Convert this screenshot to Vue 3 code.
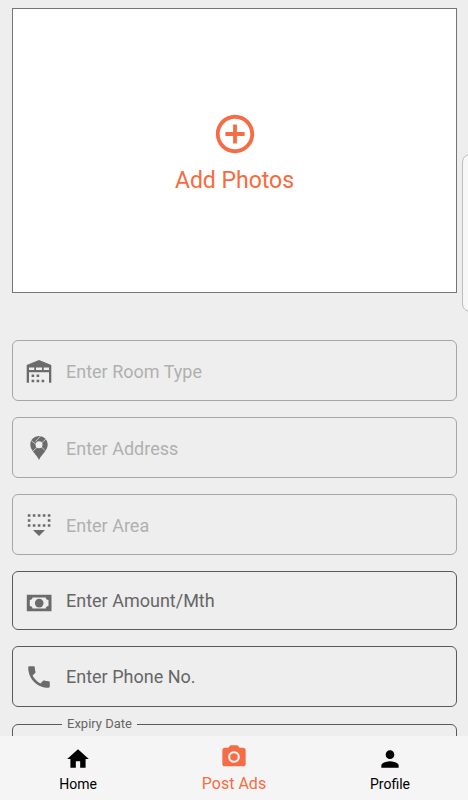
<script setup>
import { ref } from 'vue'

const roomType = ref('')
const address = ref('')
const area = ref('')
const amount = ref('')
const phone = ref('')
const expiry = ref('')
</script>

<template>
  <div class="screen">
    <main class="content">
      <button type="button" class="photos">
        <svg class="photos-icon" viewBox="0 0 24 24" aria-hidden="true">
          <path d="M13 7h-2v4H7v2h4v4h2v-4h4v-2h-4V7zm-1-5C6.48 2 2 6.48 2 12s4.48 10 10 10 10-4.48 10-10S17.52 2 12 2zm0 18c-4.41 0-8-3.59-8-8s3.59-8 8-8 8 3.59 8 8-3.59 8-8 8z" />
        </svg>
        <span>Add Photos</span>
      </button>

      <form class="form" @submit.prevent>
        <label class="field muted">
          <svg class="icon" viewBox="0 0 24 24" aria-hidden="true">
            <path d="M12 1 24.300 6v17.700H22V13.300H2v10.400H-.3V6zM2 8.500V11h5.300V8.500zm7 0V11h6V8.500zm7.700 0V11H22V8.500z" fill-rule="evenodd" />
            <path d="M4.600 15.500h2.600v2.600H4.600zm5 0h2.600v2.600H9.600zM4.600 20.700h2.600v2.600H4.600zm5 0h2.600v2.600H9.600zm5 0h2.600v2.600h-2.600z" />
          </svg>
          <input v-model="roomType" type="text" placeholder="Enter Room Type" aria-label="Room type" />
        </label>

        <label class="field muted">
          <svg class="icon" viewBox="0 0 24 24" aria-hidden="true">
            <path d="M12 0C7.100 0 3.300 3.800 3.300 8.600c0 2.600 1.200 4.800 2.700 7C8 18.500 10.500 20.500 12 24c1.500-3.500 4-5.500 6-8.400 1.500-2.200 2.700-4.400 2.700-7C20.700 3.800 16.900 0 12 0z" />
            <path class="streets" d="M4.500 4.800 8.500 8M5.500 15.500 19.500 2.500M8.500 5.500 13.500 0M14 10.500l4 4" />
            <circle class="hole" cx="12" cy="8.700" r="3.500" />
          </svg>
          <input v-model="address" type="text" placeholder="Enter Address" aria-label="Address" />
        </label>

        <label class="field muted">
          <svg class="icon" viewBox="0 0 24 24" aria-hidden="true">
            <path d="M.8 1.200h2.600v2.600H.8zm5 0h2.600v2.600H5.800zm5 0h2.600v2.600h-2.600zm5 0h2.600v2.600h-2.600zm5 0h2.600v2.600h-2.600zM.8 6.200h2.600v2.600H.8zm20 0h2.600v2.600h-2.600zM.8 11.200h2.600v2.600H.8zm5 0h2.600v2.600H5.800zm5 0h2.600v2.600h-2.600zm5 0h2.600v2.600h-2.600zm5 0h2.600v2.600h-2.600zM6 17h12l-6 6z" />
          </svg>
          <input v-model="area" type="text" placeholder="Enter Area" aria-label="Area" />
        </label>

        <label class="field short">
          <svg class="icon" viewBox="0 0 24 24" aria-hidden="true">
            <path d="M-.2 5.800h24.700v16.500H-.2zM5.500 8.600c0 1.500-1 2.500-2.700 2.500v6c1.700 0 2.700 1 2.700 2.500h13.300c0-1.500 1-2.500 2.700-2.500v-6c-1.700 0-2.700-1-2.700-2.500z" fill-rule="evenodd" />
            <circle cx="12.200" cy="14.100" r="4.300" />
          </svg>
          <input v-model="amount" type="text" inputmode="numeric" placeholder="Enter Amount/Mth" aria-label="Amount per month" />
        </label>

        <label class="field">
          <svg class="icon" viewBox="2 2 20 20" aria-hidden="true">
            <path d="M6.620 10.790c1.440 2.830 3.760 5.140 6.590 6.590l2.200-2.200c.27-.27.67-.36 1.020-.24 1.120.37 2.330.57 3.570.57.55 0 1 .45 1 1V20c0 .55-.45 1-1 1-9.390 0-17-7.610-17-17 0-.55.45-1 1-1h3.500c.55 0 1 .45 1 1 0 1.250.2 2.450.57 3.570.11.35.03.74-.25 1.020l-2.200 2.200z" />
          </svg>
          <input v-model="phone" type="tel" placeholder="Enter Phone No." aria-label="Phone number" />
        </label>

        <fieldset class="expiry">
          <legend><label for="expiry">Expiry Date</label></legend>
          <input id="expiry" v-model="expiry" type="text" />
        </fieldset>
      </form>
    </main>

    <aside class="edge-handle" aria-hidden="true"></aside>

    <nav class="tabs">
      <a href="#home" class="tab">
        <svg viewBox="0 0 24 24" aria-hidden="true"><path d="M10 20v-6h4v6h5v-8h3L12 3 2 12h3v8z" /></svg>
        <span>Home</span>
      </a>
      <a href="#post" class="tab active" aria-current="page">
        <svg viewBox="0 0 24 24" aria-hidden="true">
          <circle cx="12" cy="12" r="3.200" />
          <path d="M9 2 7.170 4H4c-1.100 0-2 .9-2 2v12c0 1.100.9 2 2 2h16c1.100 0 2-.9 2-2V6c0-1.100-.9-2-2-2h-3.170L15 2H9zm3 15c-2.760 0-5-2.240-5-5s2.240-5 5-5 5 2.240 5 5-2.240 5-5 5z" />
        </svg>
        <span>Post Ads</span>
      </a>
      <a href="#profile" class="tab">
        <svg viewBox="0 0 24 24" aria-hidden="true"><path d="M12 12c2.210 0 4-1.790 4-4s-1.790-4-4-4-4 1.790-4 4 1.790 4 4 4zm0 2c-2.670 0-8 1.340-8 4v2h16v-2c0-2.660-5.330-4-8-4z" /></svg>
        <span>Profile</span>
      </a>
    </nav>
  </div>
</template>

<style>
body {
  background: #eeeeee;
}
</style>

<style scoped>
.screen {
  display: flex;
  flex-direction: column;
  height: 100vh;
  overflow: hidden;
  background: #eeeeee;
  font-family: Roboto, sans-serif;
}

.screen *,
.screen {
  box-sizing: border-box;
}

.content {
  flex: 1;
  min-height: 0;
  overflow: hidden;
  padding: 8px 11px 0 12px;
}

.photos {
  display: flex;
  flex-direction: column;
  align-items: center;
  justify-content: center;
  gap: 10px;
  width: 100%;
  min-height: 285px;
  padding: 4px 0 0;
  border: 1px solid #757575;
  background: #ffffff;
  color: #f96a3c;
  font: 400 23px/28px Roboto, sans-serif;
}

.photos-icon {
  width: 46px;
  height: 46px;
  fill: #f66c45;
}

.form {
  display: flex;
  flex-direction: column;
  gap: 16px;
  margin-top: 47px;
}

.field {
  display: flex;
  align-items: center;
  gap: 15px;
  min-height: 61px;
  padding: 0 14px;
  border: 1px solid #5a5a5a;
  border-radius: 6px;
  color: #666666;
}

.field.short {
  min-height: 59px;
}

.field.muted {
  border-color: #a6a6a6;
  color: #b0b0b0;
}

.icon {
  flex: none;
  width: 24px;
  height: 24px;
  overflow: visible;
  fill: #6b6b6b;
}

.streets {
  fill: none;
  stroke: #eeeeee;
  stroke-width: 0.7;
}

.hole {
  fill: #eeeeee;
}

.field input,
.expiry input {
  flex: 1;
  min-width: 0;
  padding: 0;
  border: 0;
  outline: 0;
  background: transparent;
  color: #444444;
  font: 400 18px/24px Roboto, sans-serif;
}

.field.muted input {
  padding-top: 2px;
}

.field input::placeholder {
  color: #666666;
  opacity: 1;
}

.field.muted input::placeholder {
  color: #b0b0b0;
}

.expiry {
  min-width: 0;
  margin: -9px 0 0;
  padding: 0 14px 20px 49px;
  border: 1px solid #5a5a5a;
  border-radius: 6px;
}

.expiry legend {
  padding: 0 5px;
  color: #666666;
  font-size: 13px;
  line-height: 20px;
}

.edge-handle {
  position: fixed;
  top: 154px;
  right: -10px;
  width: 16px;
  height: 158px;
  border: 1px solid #bdbdbd;
  border-radius: 8px;
  background: #f7f7f7;
}

.tabs {
  display: grid;
  grid-template-columns: repeat(3, 1fr);
  min-height: 64px;
  background: #f5f5f5;
}

.tab {
  display: flex;
  flex-direction: column;
  align-items: center;
  padding-top: 10px;
  color: #000000;
  font-size: 14px;
  line-height: 24px;
  text-decoration: none;
}

.tab svg {
  width: 26px;
  height: 26px;
  fill: currentColor;
}

.tab.active {
  padding-top: 7px;
  color: #f66c45;
  font-size: 16px;
  line-height: 26px;
}

.tab.active svg {
  width: 28px;
  height: 28px;
}
</style>
